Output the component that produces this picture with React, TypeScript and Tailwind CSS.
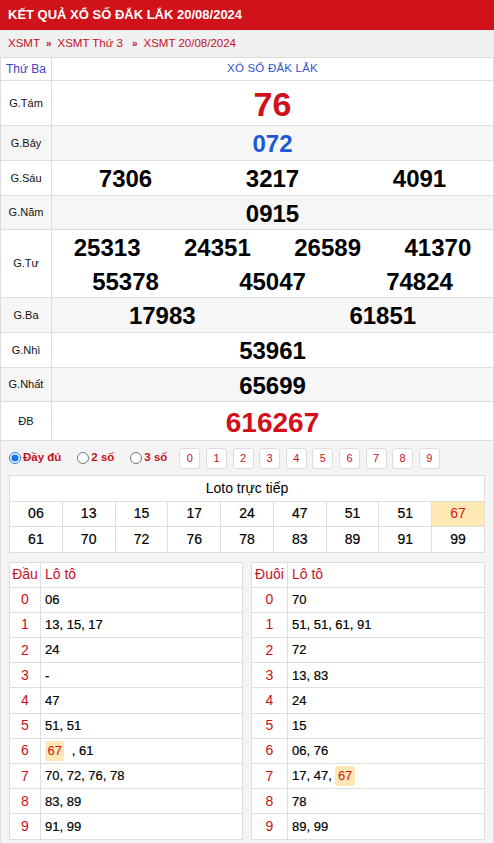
import React from "react";

const F = "font-['Liberation_Sans',Arial,sans-serif]";

function Row({
  label,
  h,
  gray,
  children,
}: {
  label: string;
  h: string;
  gray?: boolean;
  children: React.ReactNode;
}) {
  return (
    <div className={`flex border-b border-[#dddddd] ${h} ${gray ? "bg-[#f6f6f6]" : "bg-white"}`}>
      <div className="w-[51px] shrink-0 border-r border-[#dddddd] flex items-center justify-center text-[11px] text-[#111]">
        {label}
      </div>
      <div className="flex-1 min-w-0">{children}</div>
    </div>
  );
}

function Nums({ nums, cls, h = "h-full" }: { nums: string[]; cls: string; h?: string }) {
  const cols =
    nums.length === 1
      ? "grid-cols-1"
      : nums.length === 2
      ? "grid-cols-2"
      : nums.length === 3
      ? "grid-cols-3"
      : "grid-cols-4";
  return (
    <div className={`grid ${cols} ${h} items-center text-center font-bold ${cls}`}>
      {nums.map((n, i) => (
        <div key={i}>{n}</div>
      ))}
    </div>
  );
}

function Badge({ v }: { v: string }) {
  return (
    <span className="inline-flex items-center h-[20px] px-[2.5px] rounded-[3px] bg-[#ffe8b5] text-[#d4141c] [-webkit-text-stroke:0px]">
      {v}
    </span>
  );
}

function HeadTable({
  title,
  firstW,
  rows,
}: {
  title: string;
  firstW: string;
  rows: React.ReactNode[];
}) {
  return (
    <div className="bg-white border-t border-l border-r border-[#dddddd]">
      <div className="flex h-[25.2px] border-b border-[#dddddd] text-[14px] text-[#c8101e]">
        <div className={`${firstW} shrink-0 border-r border-[#dddddd] flex items-center justify-center`}>
          {title}
        </div>
        <div className="flex-1 flex items-center pl-[4px]">Lô tô</div>
      </div>
      {rows.map((r, i) => (
        <div key={i} className="flex h-[25.2px] border-b border-[#dddddd] text-[13px]">
          <div
            className={`${firstW} shrink-0 border-r border-[#dddddd] flex items-center justify-center text-[14px] text-[#c8101e]`}
          >
            {i}
          </div>
          <div className="flex-1 flex items-center pl-[4px] text-black whitespace-pre [-webkit-text-stroke:0.2px]">
            {r}
          </div>
        </div>
      ))}
    </div>
  );
}

export default function App() {
  const loto1 = ["06", "13", "15", "17", "24", "47", "51", "51", "67"];
  const loto2 = ["61", "70", "72", "76", "78", "83", "89", "91", "99"];
  const dau: React.ReactNode[] = [
    "06",
    "13, 15, 17",
    "24",
    "-",
    "47",
    "51, 51",
    <>
      <Badge v="67" />
      {"  , 61"}
    </>,
    "70, 72, 76, 78",
    "83, 89",
    "91, 99",
  ];
  const duoi: React.ReactNode[] = [
    "70",
    "51, 51, 61, 91",
    "72",
    "13, 83",
    "24",
    "15",
    "06, 76",
    <>
      {"17, 47, "}
      <Badge v="67" />
    </>,
    "78",
    "89, 99",
  ];

  return (
    <div className={`${F} w-[494px] h-[843px] overflow-hidden bg-[#f4f4f4]`}>
      {/* Title */}
      <div className="h-[30px] bg-[#d0121b] flex items-center pl-[8px] text-white font-bold text-[13px]">
        KẾT QUẢ XỔ SỐ ĐẮK LẮK 20/08/2024
      </div>
      {/* Breadcrumb */}
      <div className="h-[27px] bg-[#f0f0f0] flex items-center pl-[8px] text-[11.5px] text-[#c4101c] gap-[6px]">
        <span>XSMT</span>
        <span className="text-[#c4101c] font-bold text-[10px]">»</span>
        <span>XSMT Thứ 3</span>
        <span className="text-[#c4101c] font-bold text-[10px] ml-[3px]">»</span>
        <span>XSMT 20/08/2024</span>
      </div>

      {/* Main results table */}
      <div className="border-t border-l border-r border-[#dddddd] bg-white">
        <div className="flex h-[23px] border-b border-[#dddddd] bg-white">
          <div className="w-[51px] shrink-0 border-r border-[#dddddd] flex items-center justify-center text-[12px] text-[#3a45c8]">
            Thứ Ba
          </div>
          <div className="flex-1 flex items-center justify-center text-[11.5px] text-[#2f55d6] tracking-[0.2px]">
            XỔ SỐ ĐẮK LẮK
          </div>
        </div>
        <Row label="G.Tám" h="h-[45px]">
          <Nums nums={["76"]} cls="text-[34px] text-[#d0111b] -translate-y-[2px]" />
        </Row>
        <Row label="G.Bảy" h="h-[35px]" gray>
          <Nums nums={["072"]} cls="text-[24px] text-[#1d58d8]" />
        </Row>
        <Row label="G.Sáu" h="h-[35px]">
          <Nums nums={["7306", "3217", "4091"]} cls="text-[24px] text-black" />
        </Row>
        <Row label="G.Năm" h="h-[34px]" gray>
          <Nums nums={["0915"]} cls="text-[24px] text-black" />
        </Row>
        <Row label="G.Tư" h="h-[68px]">
          <div className="flex flex-col h-full justify-center">
            <Nums nums={["25313", "24351", "26589", "41370"]} cls="text-[24px] text-black" h="h-[34px]" />
            <Nums nums={["55378", "45047", "74824"]} cls="text-[24px] text-black" h="h-[33px]" />
          </div>
        </Row>
        <Row label="G.Ba" h="h-[35px]" gray>
          <Nums nums={["17983", "61851"]} cls="text-[24px] text-black" />
        </Row>
        <Row label="G.Nhì" h="h-[35px]">
          <Nums nums={["53961"]} cls="text-[24px] text-black" />
        </Row>
        <Row label="G.Nhất" h="h-[34px]" gray>
          <Nums nums={["65699"]} cls="text-[24px] text-black" />
        </Row>
        <Row label="ĐB" h="h-[39px]">
          <Nums nums={["616267"]} cls="text-[28px] text-[#d0111b]" />
        </Row>
      </div>

      {/* Bottom section */}
      <div className="border-l border-r border-[#dddddd] h-[403px] px-[8px]">
        {/* Radios + number buttons */}
        <div className="flex items-center h-[34px] text-[11.5px] font-bold text-[#c8101e]">
          <input
            type="radio"
            name="mode"
            defaultChecked
            className="m-0 w-[12px] h-[12px] accent-[#1a73e8]"
          />
          <span className="ml-[2px]">Đầy đủ</span>
          <input type="radio" name="mode" className="m-0 ml-[16px] w-[12px] h-[12px]" />
          <span className="ml-[2px]">2 số</span>
          <input type="radio" name="mode" className="m-0 ml-[16px] w-[12px] h-[12px]" />
          <span className="ml-[2px]">3 số</span>
          <div className="flex gap-[5.6px] ml-[12px]">
            {["0", "1", "2", "3", "4", "5", "6", "7", "8", "9"].map((d) => (
              <div
                key={d}
                className="w-[21px] h-[21px] bg-white border border-[#dcdcdc] rounded-[3px] flex items-center justify-center text-[11px] font-normal text-[#c8101e]"
              >
                {d}
              </div>
            ))}
          </div>
        </div>

        {/* Loto trực tiếp */}
        <div className="bg-white border-l border-t border-[#dddddd]">
          <div className="h-[25.5px] border-r border-b border-[#dddddd] flex items-center justify-center text-[14px] text-black">
            Loto trực tiếp
          </div>
          {[loto1, loto2].map((row, ri) => (
            <div key={ri} className="grid grid-cols-9">
              {row.map((n, i) => {
                const hl = ri === 0 && i === 8;
                return (
                  <div
                    key={i}
                    className={`h-[25.5px] border-r border-b border-[#dddddd] flex items-center justify-center text-[14px] ${
                      hl ? "bg-[#fee8b4] text-[#d4141c]" : "text-black [-webkit-text-stroke:0.2px]"
                    }`}
                  >
                    {n}
                  </div>
                );
              })}
            </div>
          ))}
        </div>

        {/* Đầu / Đuôi */}
        <div className="grid grid-cols-2 gap-[8px] mt-[9px]">
          <HeadTable title="Đầu" firstW="w-[31px]" rows={dau} />
          <HeadTable title="Đuôi" firstW="w-[36px]" rows={duoi} />
        </div>
      </div>
    </div>
  );
}
